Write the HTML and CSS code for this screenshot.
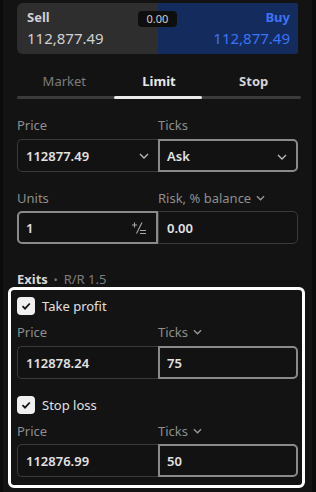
FILE: index.html
```html
<!DOCTYPE html>
<html>
<head>
<meta charset="utf-8">
<link rel="stylesheet" href="styles.css">
</head>
<body>
<div class="panel">
  <div class="sides">
    <div class="side sell"><div class="side-name">Sell</div><div class="side-price">112,877.49</div></div>
    <div class="side buy"><div class="side-name">Buy</div><div class="side-price">112,877.49</div></div>
    <div class="spread">0.00</div>
  </div>
  <div class="tabs">
    <div class="tab tab-muted">Market</div>
    <div class="tab tab-active">Limit</div>
    <div class="tab tab-strong">Stop</div>
  </div>
  <div class="track"><div class="track-active"></div></div>

  <div class="grid labels"><div class="label">Price</div><div class="label">Ticks</div></div>
  <div class="grid fields">
    <div class="field">112877.49<svg class="chev" viewBox="0 0 10 6"><path d="M1 1l4 4 4-4" /></svg></div>
    <div class="field focus">Ask<svg class="chev" viewBox="0 0 10 6"><path d="M1 1l4 4 4-4" /></svg></div>
  </div>

  <div class="grid labels"><div class="label">Units</div><div class="label">Risk, % balance <svg class="chev-s" viewBox="0 0 10 6"><path d="M1 1l4 4 4-4" /></svg></div></div>
  <div class="grid fields units">
    <div class="field focus">1<svg class="pm" viewBox="0 0 16 14"><path d="M1 4h5M3.5 1.5v5M11 1.5L5.5 12.5M9 9.5h6M9 12.5h6"/></svg></div>
    <div class="field">0.00</div>
  </div>

  <div class="exits"><b>Exits</b><span class="dot">•</span>R/R 1.5</div>
  <div class="exit-box">
    <div class="check-row"><span class="check"><svg viewBox="0 0 12 12"><path d="M2.5 6.2l2.5 2.5 4.8-5.2"/></svg></span>Take profit</div>
    <div class="grid labels"><div class="label">Price</div><div class="label">Ticks <svg class="chev-s" viewBox="0 0 10 6"><path d="M1 1l4 4 4-4" /></svg></div></div>
    <div class="grid fields">
      <div class="field">112878.24</div>
      <div class="field focus">75</div>
    </div>
    <div class="check-row second"><span class="check"><svg viewBox="0 0 12 12"><path d="M2.5 6.2l2.5 2.5 4.8-5.2"/></svg></span>Stop loss</div>
    <div class="grid labels"><div class="label">Price</div><div class="label">Ticks <svg class="chev-s" viewBox="0 0 10 6"><path d="M1 1l4 4 4-4" /></svg></div></div>
    <div class="grid fields last">
      <div class="field">112876.99</div>
      <div class="field focus">50</div>
    </div>
  </div>
</div>
</body>
</html>
```
FILE: styles.css
```css
* { box-sizing: border-box; }
html, body { margin: 0; padding: 0; background: #0b0b0b; }
body { font-family: "Noto Sans", "Open Sans", sans-serif; color: #dcdcdc; font-size: 13px; }
.panel {
  width: 316px; height: 492px;
  margin: 0;
  border-left: 3px solid #0b0b0b;
  border-right: 4px solid #0b0b0b;
  background: #131313;
  padding: 3px 11px 0 14px;
}
.sides {
  position: relative;
  display: grid; grid-template-columns: 141px 140px;
  height: 51px; border-radius: 6px; overflow: hidden;
}
.side { padding: 5px 10px 0 10px; }
.sell { background: #2e2e2e; color: #cfd1d4; }
.buy { background: #142b5e; color: #3c73f5; text-align: right; padding-right: 8px; }
.side-name { font-weight: 700; font-size: 13px; line-height: 18px; }
.side-price { font-size: 15px; line-height: 20px; margin-top: 2px; }
.spread {
  position: absolute; left: 121px; top: 8px;
  width: 39px; height: 16px; border-radius: 4px;
  background: #0e0e0e; color: #cfd1d4;
  font-size: 11px; line-height: 16px; text-align: center;
}
.tabs { display: grid; grid-template-columns: 1fr 1fr 1fr; margin-top: 16px; height: 22px; align-items: center; }
.tab { text-align: center; font-size: 13px; }
.tab-muted { color: #7d7d7d; }
.tab-active { color: #e8e8e8; font-weight: 700; }
.tab-strong { color: #d5d5d5; font-weight: 700; }
.track { margin-top: 4px; height: 3px; background: #3b3b3b; border-radius: 2px; position: relative; }
.track-active { position: absolute; left: 97px; width: 88px; top: 0; height: 3px; background: #ececec; border-radius: 2px; }

.grid { display: grid; grid-template-columns: 141px 140px; }
.labels { margin-top: 16px; height: 20px; align-items: center; }
.label { color: #8e8e8e; font-size: 13px; display: flex; align-items: center; gap: 5px; }
.fields { margin-top: 4px; height: 33px; }
.fields.units { margin-top: 3px; }
.field {
  position: relative;
  border: 1px solid #3a3a3a; background: #121212;
  display: flex; align-items: center; padding-left: 8px;
  font-weight: 600; color: #e2e2e2; font-size: 13px;
}
.field:first-child { border-radius: 5px 0 0 5px; border-right: none; }
.field:last-child { border-radius: 0 5px 5px 0; }
.field.focus { border: 2px solid #8a8a8a; padding-left: 7px; }
.field.focus:first-child { border-radius: 5px 0 0 5px; }
.chev { position: absolute; right: 9px; top: 13px; width: 10px; height: 6px; fill: none; stroke: #bdbdbd; stroke-width: 1.3; }
.chev-s { width: 9px; height: 6px; fill: none; stroke: #9a9a9a; stroke-width: 1.4; }
.pm { position: absolute; right: 9px; top: 8px; width: 16px; height: 14px; fill: none; stroke: #a8a8a8; stroke-width: 1.1; }

.exits { margin-top: 25px; height: 20px; line-height: 20px; color: #7d7d7d; font-size: 13px; }
.exits b { color: #d8d8d8; }
.dot { margin: 0 6px; color: #7d7d7d; font-size: 10px; }
.exit-box {
  margin: -2px 0 0 -9px;
  width: 297px; height: 201px;
  border: 3px solid #ffffff; border-radius: 6px;
  padding: 7px 4px 0 6px;
}
.check-row { display: flex; align-items: center; gap: 7px; height: 18px; color: #e0e0e0; font-size: 13px; }
.check-row.second { margin-top: 17px; }
.check { width: 18px; height: 18px; background: #f0f0f0; border-radius: 4px; display: flex; align-items: center; justify-content: center; }
.check svg { width: 12px; height: 12px; fill: none; stroke: #141414; stroke-width: 1.8; }
.exit-box .labels { margin-top: 7px; }
.exit-box .fields.last { margin-top: 3px; }
```
